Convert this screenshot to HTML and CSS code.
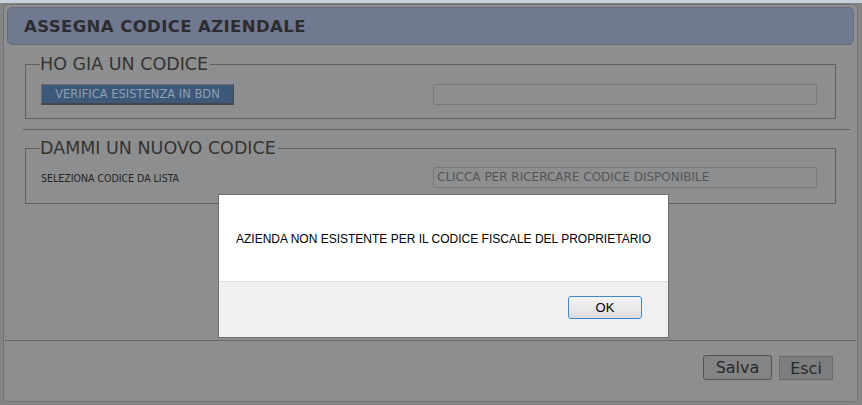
FILE: index.html
```html
<!DOCTYPE html>
<html lang="it">
<head>
<meta charset="utf-8">
<title>Assegna codice aziendale</title>
<link rel="stylesheet" href="styles.css">
</head>
<body>
<div class="panel">
  <div class="header"><h1 class="title">ASSEGNA CODICE AZIENDALE</h1></div>
  <div class="content">
    <fieldset class="group group-first">
      <legend class="legend">HO GIA UN CODICE</legend>
      <div class="row row-first">
        <button class="btn-verify" type="button">VERIFICA ESISTENZA IN BDN</button>
        <div class="field"></div>
      </div>
    </fieldset>
    <div class="sep"></div>
    <fieldset class="group group-second">
      <legend class="legend">DAMMI UN NUOVO CODICE</legend>
      <div class="row row-second">
        <span class="label">SELEZIONA CODICE DA LISTA</span>
        <div class="field field-text">CLICCA PER RICERCARE CODICE DISPONIBILE</div>
      </div>
    </fieldset>
  </div>
  <div class="footer">
    <button class="btn btn-save" type="button">Salva</button>
    <button class="btn btn-exit" type="button">Esci</button>
  </div>
</div>

<div class="alert">
  <div class="alert-body">AZIENDA NON ESISTENTE PER IL CODICE FISCALE DEL PROPRIETARIO</div>
  <div class="alert-foot"><button class="alert-ok" type="button">OK</button></div>
</div>
</body>
</html>
```
FILE: styles.css
```css
* { box-sizing: border-box; }
html, body { margin: 0; padding: 0; }
body {
  width: 862px;
  height: 405px;
  overflow: hidden;
  background: #838587;
  border-top: 3px solid #c7d1dc;
  font-family: "DejaVu Sans", Verdana, sans-serif;
  position: relative;
}
.panel {
  margin: 1px 4px 0 3px;
  height: 398px;
  border: 1px solid #727374;
  border-radius: 4px;
  background: #8d8e8f;
  padding: 2px 3px 0 3px;
  display: flex;
  flex-direction: column;
}
.header {
  height: 38px;
  background: #707990;
  border: 1px solid #666d80;
  border-radius: 5px;
  display: flex;
  align-items: center;
  padding-left: 16px;
}
.title {
  margin: 0;
  font-size: 16.5px;
  font-weight: bold;
  color: #2d2d31;
  letter-spacing: 0.4px;
}
.content {
  flex: 1;
  padding: 0 18px 0 18px;
}
.group {
  margin: 0;
  border: 1px solid #5e5f60;
  padding: 0 18px 0 14px;
  min-width: 0;
}
.legend {
  padding: 0 2px 0 0;
  font-size: 17.5px;
  line-height: 18px;
  color: #37332f;
}
.group-first { margin-top: 10px; padding-bottom: 13px; }
.group-second { margin-top: 9px; padding-bottom: 15px; }
.row {
  display: flex;
  align-items: center;
  justify-content: space-between;
}
.row-first { padding-top: 11px; }
.row-second { padding-top: 10px; }
.btn-verify {
  margin: 0 0 0 1px;
  width: 193px;
  height: 21px;
  padding: 0;
  background: #3d5878;
  border: 1px solid #6b6c6d;
  border-right-color: #454647;
  border-bottom: 2px solid #454647;
  color: #8d9fb3;
  font-family: "DejaVu Sans", Verdana, sans-serif;
  font-size: 11.5px;
  line-height: 17px;
}
.field {
  width: 384px;
  height: 21px;
  border: 1px solid #797a7b;
  border-radius: 2px;
}
.field-text {
  padding-left: 3px;
  font-size: 12px;
  line-height: 19px;
  color: #555657;
  white-space: nowrap;
}
.label {
  margin-left: 1px;
  font-family: "DejaVu Sans Condensed", "DejaVu Sans", sans-serif;
  font-size: 10.5px;
  color: #242424;
}
.sep {
  height: 1px;
  background: #5e5f60;
  margin: 10px -14px 0 -2px;
}
.footer {
  margin: 0 -2px;
  height: 61px;
  border-top: 1px solid #656667;
  display: flex;
  justify-content: flex-end;
  align-items: flex-start;
  gap: 7px;
  padding: 14px 23px 0 0;
}
.btn {
  font-family: "DejaVu Sans", Verdana, sans-serif;
  font-size: 16px;
  color: #282828;
  padding: 0;
}
.btn-save {
  width: 69px;
  height: 25px;
  background: #838485;
  border: 1px solid #525354;
  border-radius: 3px;
}
.btn-exit {
  width: 54px;
  height: 24px;
  margin-top: 1px;
  background: #7d7e7f;
  border: 1px solid #696a6b;
}
.alert {
  position: absolute;
  left: 218px;
  top: 191px;
  width: 451px;
  height: 144px;
  border: 1px solid #6b6c6d;
  background: #ffffff;
  display: flex;
  flex-direction: column;
  font-family: "Liberation Sans", Arial, sans-serif;
}
.alert-body {
  height: 86px;
  display: flex;
  align-items: center;
  justify-content: center;
  font-size: 12px;
  color: #000;
  padding-top: 2px;
  white-space: nowrap;
}
.alert-foot {
  flex: 1;
  background: #f0f0f0;
  border-top: 1px solid #dfdfdf;
  display: flex;
  justify-content: flex-end;
  align-items: flex-start;
  padding: 14px 26px 0 0;
}
.alert-ok {
  width: 74px;
  height: 23px;
  border: 1px solid #3b8ad0;
  border-radius: 3px;
  background: linear-gradient(#f4f4f4, #dedede);
  font-family: "Liberation Sans", Arial, sans-serif;
  font-size: 13px;
  color: #000;
  padding: 0;
}
```
